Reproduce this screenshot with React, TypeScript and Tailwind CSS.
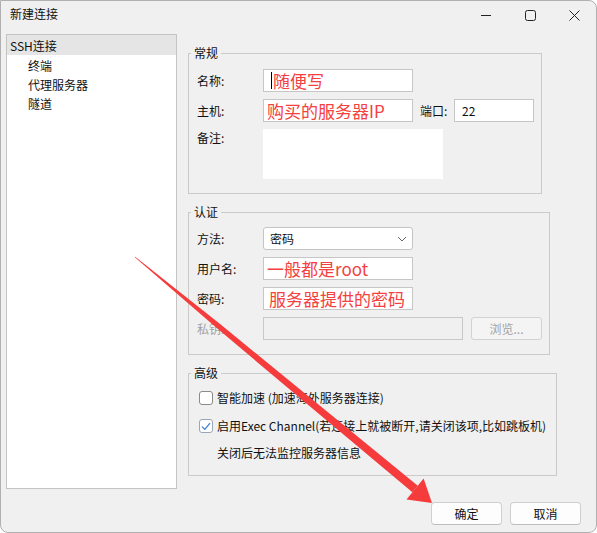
import React from "react";

function Box({
  w,
  children,
  className = "",
}: {
  w: string;
  children?: React.ReactNode;
  className?: string;
}) {
  return (
    <div
      className={`h-[23px] bg-white border border-[#c6c6c6] flex items-center ${w} ${className}`}
    >
      {children}
    </div>
  );
}

function Label({ children, gray }: { children: React.ReactNode; gray?: boolean }) {
  return (
    <div className={`w-[66px] shrink-0 ${gray ? "text-[#a2a2a2]" : ""}`}>{children}</div>
  );
}

function Red({ children }: { children: React.ReactNode }) {
  return <span className="text-[17px] leading-[20px] text-[#f54040] whitespace-nowrap">{children}</span>;
}

function CheckBox({ checked }: { checked?: boolean }) {
  return (
    <div
      className={`w-[14px] h-[14px] shrink-0 rounded-[3px] bg-white border flex items-center justify-center ${
        checked ? "border-[#9aa6b4]" : "border-[#8a8a8a]"
      }`}
    >
      {checked && (
        <svg width="10" height="9" viewBox="0 0 10 9">
          <path d="M1 4.6 L3.8 7.4 L9 1.2" fill="none" stroke="#3b7fd4" strokeWidth="1.3" />
        </svg>
      )}
    </div>
  );
}

export default function App() {
  return (
    <div className="relative w-[597px] h-[533px] bg-white font-['Noto_Sans_CJK_SC','Microsoft_YaHei',sans-serif] text-[12px] leading-[16px] text-[#111]">
      <div className="flex flex-col w-full h-full bg-[#f0f0f0] border border-[#b0b0b0] rounded-tr-[8px] rounded-br-[8px] rounded-bl-[8px] overflow-hidden">
        {/* Title bar */}
        <div className="flex h-[33px] shrink-0">
          <div className="ml-[9px] mt-[5px]">新建连接</div>
          <div className="ml-auto flex h-[28px]">
            <div className="w-[44px] flex items-center justify-center">
              <svg width="10" height="10" viewBox="0 0 10 10">
                <path d="M0 5.5 H10" stroke="#222" strokeWidth="1" />
              </svg>
            </div>
            <div className="w-[44px] flex items-center justify-center">
              <svg width="11" height="11" viewBox="0 0 11 11">
                <rect x="0.5" y="0.5" width="10" height="10" rx="2" fill="none" stroke="#222" strokeWidth="1" />
              </svg>
            </div>
            <div className="w-[44px] flex items-center justify-center">
              <svg width="11" height="11" viewBox="0 0 11 11">
                <path d="M0.5 0.5 L10.5 10.5 M10.5 0.5 L0.5 10.5" stroke="#222" strokeWidth="1" />
              </svg>
            </div>
          </div>
        </div>

        {/* Body */}
        <div className="flex flex-1 min-h-0">
          {/* Tree */}
          <div className="ml-[5px] w-[171px] h-[455px] shrink-0 bg-white border border-[#c4c4c4] flex flex-col">
            <div className="h-[20px] leading-[20px] pt-[1px] pl-[3px] bg-[#e5e5e5]">SSH连接</div>
            <div className="h-[19px] leading-[19px] pt-[1px] pl-[21px]">终端</div>
            <div className="h-[19px] leading-[19px] pt-[1px] pl-[21px]">代理服务器</div>
            <div className="h-[19px] leading-[19px] pt-[1px] pl-[21px]">隧道</div>
          </div>

          {/* Right */}
          <div className="ml-[11px] flex-1 flex flex-col pr-[15px]">
            {/* 常规 */}
            <fieldset className="mt-[11px] w-[354px] border border-[#cacaca]">
              <legend className="ml-[2px] px-[3px] leading-[16px]">常规</legend>
              <div className="pl-[8px] pt-[8px] pb-[14px] flex flex-col gap-[7px]">
                <div className="flex items-center h-[23px]">
                  <Label>名称:</Label>
                  <Box w="w-[150px]" className="border-[#86a8d2] pl-[7px]">
                    <span className="inline-block w-[1px] h-[17px] bg-black mr-[1px]" />
                    <Red>随便写</Red>
                  </Box>
                </div>
                <div className="flex items-center h-[23px]">
                  <Label>主机:</Label>
                  <Box w="w-[150px]" className="pl-[3px]">
                    <Red>购买的服务器IP</Red>
                  </Box>
                  <div className="ml-[7px] w-[34px]">端口:</div>
                  <Box w="w-[80px]" className="pl-[7px]">
                    <span>22</span>
                  </Box>
                </div>
                <div className="flex items-start">
                  <div className="w-[66px] shrink-0 pt-[1px]">备注:</div>
                  <div className="w-[180px] h-[50px] bg-white" />
                </div>
              </div>
            </fieldset>

            {/* 认证 */}
            <fieldset className="mt-[10px] w-[362px] border border-[#cacaca]">
              <legend className="ml-[2px] px-[3px] leading-[16px]">认证</legend>
              <div className="pl-[8px] pt-[7px] pb-[14px] flex flex-col gap-[7px]">
                <div className="flex items-center h-[23px]">
                  <Label>方法:</Label>
                  <div className="w-[150px] h-[23px] bg-white border border-[#c4c4c4] rounded-[3px] flex items-center pl-[6px] pr-[5px]">
                    <span>密码</span>
                    <svg className="ml-auto" width="10" height="6" viewBox="0 0 10 6">
                      <path d="M1 1 L5 5 L9 1" fill="none" stroke="#666" strokeWidth="1" />
                    </svg>
                  </div>
                </div>
                <div className="flex items-center h-[23px]">
                  <Label>用户名:</Label>
                  <Box w="w-[150px]" className="pl-[3px]">
                    <Red>一般都是root</Red>
                  </Box>
                </div>
                <div className="flex items-center h-[23px]">
                  <Label>密码:</Label>
                  <Box w="w-[150px]" className="pl-[5px]">
                    <Red>服务器提供的密码</Red>
                  </Box>
                </div>
                <div className="flex items-center h-[23px]">
                  <Label gray>私钥:</Label>
                  <div className="w-[200px] h-[23px] border border-[#c8c8c8] bg-[#f0f0f0]" />
                  <div className="ml-[8px] w-[71px] h-[23px] rounded-[3px] border border-[#d2d2d2] bg-[#f4f4f4] text-[#a2a2a2] flex items-center justify-center">
                    浏览...
                  </div>
                </div>
              </div>
            </fieldset>

            {/* 高级 */}
            <fieldset className="mt-[10px] w-[369px] border border-[#cacaca]">
              <legend className="ml-[2px] px-[3px] leading-[16px]">高级</legend>
              <div className="pl-[10px] pt-[8px] pb-[14px] flex flex-col">
                <div className="flex items-center h-[18px] gap-[4px]">
                  <CheckBox />
                  <span className="whitespace-nowrap">智能加速 (加速海外服务器连接)</span>
                </div>
                <div className="flex items-center h-[18px] gap-[4px] mt-[10px]">
                  <CheckBox checked />
                  <span className="whitespace-nowrap">启用Exec Channel(若连接上就被断开,请关闭该项,比如跳板机)</span>
                </div>
                <div className="ml-[18px] mt-[10px] whitespace-nowrap">关闭后无法监控服务器信息</div>
              </div>
            </fieldset>

            {/* Buttons */}
            <div className="mt-[26px] flex justify-end gap-[8px]">
              <div className="w-[71px] h-[23px] bg-[#fdfdfd] border border-[#cfcfcf] border-b-[#bdbdbd] rounded-[4px] flex items-center justify-center">
                确定
              </div>
              <div className="w-[71px] h-[23px] bg-[#fdfdfd] border border-[#cfcfcf] border-b-[#bdbdbd] rounded-[4px] flex items-center justify-center">
                取消
              </div>
            </div>
          </div>
        </div>
      </div>

      {/* Red annotation arrow */}
      <svg
        className="absolute inset-0 pointer-events-none"
        width="597"
        height="533"
        viewBox="0 0 597 533"
      >
        <polygon
          points="135.2,256.8 220.7,324.6 417.8,485.7 412.4,492.3 217.3,328.6 134.8,257.2"
          fill="#f53b3b"
        />
        <polygon points="432,503 406.5,499.5 423.6,478.5" fill="#f53b3b" />
      </svg>
    </div>
  );
}
